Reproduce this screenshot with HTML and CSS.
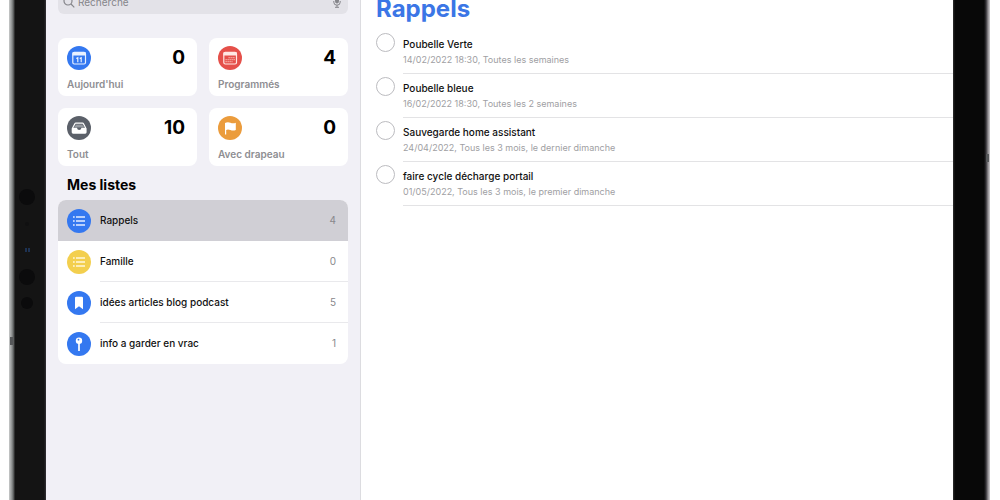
FILE: index.html
```html
<!DOCTYPE html>
<html lang="fr">
<head>
<meta charset="utf-8">
<title>Rappels</title>
<link rel="stylesheet" href="styles.css">
</head>
<body>
<div class="tablet">
  <div class="bezel bezel-left">
    <span class="button-mark mark-left"></span>
    <svg class="sensors" width="18" height="124" viewBox="0 0 18 124" aria-hidden="true">
      <g fill="#0b0b0c"><circle cx="9" cy="9" r="8"/><circle cx="9" cy="89" r="8"/><circle cx="9" cy="115" r="6"/></g>
      <circle cx="9" cy="36" r="2" fill="#101011"/>
      <path d="M8 60v4M11 60v4" stroke="#203c68" stroke-width="1.500"/>
    </svg>
  </div>
  <div class="screen">
    <aside class="sidebar">
      <label class="search">
        <svg width="12" height="12" viewBox="0 0 12 12" fill="none" stroke="#85858a" stroke-width="1.2" aria-hidden="true"><circle cx="5" cy="5" r="4"/><path d="M8 8l3.300 3.300"/></svg>
        <input type="search" placeholder="Recherche" aria-label="Recherche">
        <svg width="8" height="12" viewBox="0 0 8 12" fill="none" stroke="#85858a" aria-hidden="true"><rect x="2.500" y="0.500" width="3" height="6.500" rx="1.500" fill="#85858a"/><path d="M.8 5v1.200a3.200 3 0 0 0 6.400 0V5M4 9.200v2M2 11.300h4"/></svg>
      </label>
      <nav class="cards">
        <button class="card">
          <svg class="badge blue" viewBox="0 0 24 24"><rect x="5.800" y="6.300" width="12.700" height="11.700" rx="1.500" fill="none" stroke="#e9f1ff" stroke-width="1.200"/><path d="M5.500 6.500h13.300v3H5.500z" fill="#e9f1ff"/><path d="M9.300 12.500l1.500-.8v4.500M12.700 12.500l1.500-.8v4.500" fill="none" stroke="#e9f1ff" stroke-width="1.200"/></svg>
          <span class="total">0</span><span class="name">Aujourd'hui</span>
        </button>
        <button class="card">
          <svg class="badge red" viewBox="0 0 24 24"><rect x="5.800" y="6.300" width="12.700" height="11.700" rx="1.500" fill="none" stroke="#ffe8e3" stroke-width="1.200"/><path d="M5.500 6.500h13.300v3H5.500z" fill="#ffe8e3"/><path d="M10.500 11.700h6.500M7.500 13.700h9.500M7.500 15.700h7" stroke="#f6aca4" stroke-width="1.200" stroke-dasharray="1.300 .7"/></svg>
          <span class="total">4</span><span class="name">Programmés</span>
        </button>
        <button class="card">
          <svg class="badge gray" viewBox="0 0 24 24"><path d="M4.700 12.500L7.300 7.500Q7.800 6.500 8.800 6.500h6.700q1 0 1.500 1l2.600 5v3.800q0 1.400-1.400 1.400H6.100q-1.400 0-1.400-1.400z" fill="#fff"/><path d="M6.300 11.800l2.300-4h7.100l2.300 4h-3.500q-.5 2.200-2.300 2.200T9.900 11.800z" fill="#5b6069"/><path d="M8.500 9.200h7.300M7.600 10.800h9.100" stroke="#d5d8dc" stroke-width=".7"/></svg>
          <span class="total">10</span><span class="name">Tout</span>
        </button>
        <button class="card">
          <svg class="badge orange" viewBox="0 0 24 24"><path d="M7 18.500V7q2.700-1.300 5.400-.2t5.400 0v7.200q-2.700 1.100-5.400 0t-4.200 0v4.500z" fill="#fff"/></svg>
          <span class="total">0</span><span class="name">Avec drapeau</span>
        </button>
      </nav>
      <h2 class="lists-title">Mes listes</h2>
      <nav class="lists">
        <button class="list selected">
          <svg class="badge blue" viewBox="0 0 24 24"><path d="M9 8h9M9 12h9M9 16h9" stroke="#e3edff" stroke-width="1.500"/><path d="M6 8h1.700M6 12h1.700M6 16h1.700" stroke="#e3edff" stroke-width="1.700"/></svg>
          <span class="row"><span>Rappels</span><span class="count">4</span></span>
        </button>
        <button class="list">
          <svg class="badge yellow" viewBox="0 0 24 24"><path d="M9 8h9M9 12h9M9 16h9" stroke="#fff8dc" stroke-width="1.500"/><path d="M6 8h1.700M6 12h1.700M6 16h1.700" stroke="#fff8dc" stroke-width="1.700"/></svg>
          <span class="row"><span>Famille</span><span class="count">0</span></span>
        </button>
        <button class="list">
          <svg class="badge blue" viewBox="0 0 24 24"><path d="M8 7q0-1.200 1.200-1.200h5.600q1.200 0 1.200 1.200v11.300l-4-3-4 3z" fill="#fff"/></svg>
          <span class="row"><span>idées articles blog podcast</span><span class="count">5</span></span>
        </button>
        <button class="list">
          <svg class="badge blue" viewBox="0 0 24 24"><circle cx="12" cy="8.700" r="3.200" fill="#fff"/><circle cx="11.500" cy="7.700" r=".9" fill="#3478f0"/><path d="M12 11v8" stroke="#fff" stroke-width="1.700"/></svg>
          <span class="row"><span>info a garder en vrac</span><span class="count">1</span></span>
        </button>
      </nav>
    </aside>
    <main class="content">
      <h1 class="title">Rappels</h1>
      <ul class="reminders">
        <li class="reminder"><input class="check" type="checkbox" id="r1"><label class="details" for="r1"><span class="task">Poubelle Verte</span><span class="date">14/02/2022 18:30, Toutes les semaines</span></label></li>
        <li class="reminder"><input class="check" type="checkbox" id="r2"><label class="details" for="r2"><span class="task">Poubelle bleue</span><span class="date">16/02/2022 18:30, Toutes les 2 semaines</span></label></li>
        <li class="reminder"><input class="check" type="checkbox" id="r3"><label class="details" for="r3"><span class="task">Sauvegarde home assistant</span><span class="date">24/04/2022, Tous les 3 mois, le dernier dimanche</span></label></li>
        <li class="reminder"><input class="check" type="checkbox" id="r4"><label class="details" for="r4"><span class="task">faire cycle décharge portail</span><span class="date">01/05/2022, Tous les 3 mois, le premier dimanche</span></label></li>
      </ul>
    </main>
  </div>
  <div class="bezel bezel-right"><span class="button-mark mark-right"></span></div>
</div>
</body>
</html>
```
FILE: styles.css
```css
* { box-sizing: border-box; }

body {
  margin: 0;
  background: #fff;
  font-family: Inter, "Liberation Sans", sans-serif;
  color: #111;
}

button, input { font: inherit; color: inherit; }

.tablet {
  display: flex;
  height: 100vh;
  overflow: hidden;
  padding: 0 10px 0 9px;
}

.bezel { position: relative; flex: none; width: 37px; }

.bezel-left {
  background: linear-gradient(90deg, #c8caca 0, #8b8e8e 3px, #4a4c4c 5px, #141414 6px, #141414 35px, #333136 37px);
}

.bezel-right {
  background: linear-gradient(90deg, #303030 0, #080808 2px, #080808 31px, #343236 33px, #8d8a8e 35px, #d0ced0 37px);
}

.sensors { position: absolute; left: 9px; top: 188px; }
.button-mark { position: absolute; width: 3px; height: 8px; background: #555759; }
.mark-left { left: 1px; top: 337px; }
.mark-right { right: 1px; top: 154px; }

.screen { display: flex; flex: 1; min-width: 0; background: #fff; }

.sidebar {
  flex: none;
  width: 315px;
  margin-top: -10px;
  padding: 0 12px;
  background: #f1f0f6;
  border-right: 1px solid #dcdce0;
}

.search {
  display: flex;
  align-items: center;
  gap: 3px;
  height: 24px;
  padding: 0 7px 0 5px;
  border-radius: 6px;
  background: #e3e2e8;
}

.search input {
  flex: 1;
  min-width: 0;
  padding: 0;
  border: 0;
  outline: 0;
  background: none;
  font-size: 10px;
  appearance: none;
}

.search input::placeholder { color: #85858a; opacity: 1; }

.cards {
  display: grid;
  grid-template-columns: 1fr 1fr;
  gap: 12px;
  margin-top: 24px;
}

.card {
  display: grid;
  grid-template-columns: 24px 1fr;
  align-content: start;
  row-gap: 8px;
  height: 58px;
  padding: 8px 12px 0 9px;
  border: 0;
  border-radius: 8px;
  background: #fff;
  text-align: left;
}

.badge { display: block; flex: none; width: 24px; height: 24px; border-radius: 50%; }
.blue { background: #3478f0; }
.red { background: #e5504a; }
.gray { background: #5b6069; }
.orange { background: #eb9c3c; }
.yellow { background: #f3cf4e; }

.total { font-size: 19px; line-height: 24px; font-weight: 700; color: #000; text-align: right; }
.name { grid-column: 1 / -1; font-size: 10px; line-height: 12px; font-weight: 600; color: #8e8e92; }

.lists-title { margin: 10px 9px 6px; font-size: 14px; line-height: 18px; font-weight: 700; color: #000; }

.lists { overflow: hidden; border-radius: 8px; background: #fff; }

.list {
  display: flex;
  align-items: center;
  gap: 9px;
  width: 100%;
  padding: 0 0 0 9px;
  border: 0;
  background: none;
  font-size: 10px;
  font-weight: 500;
  text-align: left;
}

.row {
  display: flex;
  flex: 1;
  align-items: center;
  justify-content: space-between;
  height: 41px;
  padding-right: 12px;
  border-bottom: 1px solid #e9e9ec;
}

.selected { background: #d0cfd5; }
.selected .row, .list:last-child .row { border-color: transparent; }
.count { font-size: 10px; font-weight: 400; color: #88888c; }

.content { flex: 1; min-width: 0; padding-left: 15px; }

.title { margin: -6px 0 6px; font-size: 24px; line-height: 30px; font-weight: 700; color: #3b76e6; }

.reminders { margin: 0; padding: 0; list-style: none; }
.reminder { display: flex; gap: 8px; }

.check {
  flex: none;
  width: 19px;
  height: 19px;
  margin: 3px 0 0;
  border: 1px solid #bcbcc0;
  border-radius: 50%;
  appearance: none;
}

.check:checked { background: #3478f0; }

.details {
  display: flex;
  flex: 1;
  flex-direction: column;
  height: 44px;
  padding-top: 7px;
  border-bottom: 1px solid #e3e3e5;
}

.task { font-size: 10px; line-height: 15px; font-weight: 500; }
.date { font-size: 9px; line-height: 16px; color: #a0a0a3; }
```
